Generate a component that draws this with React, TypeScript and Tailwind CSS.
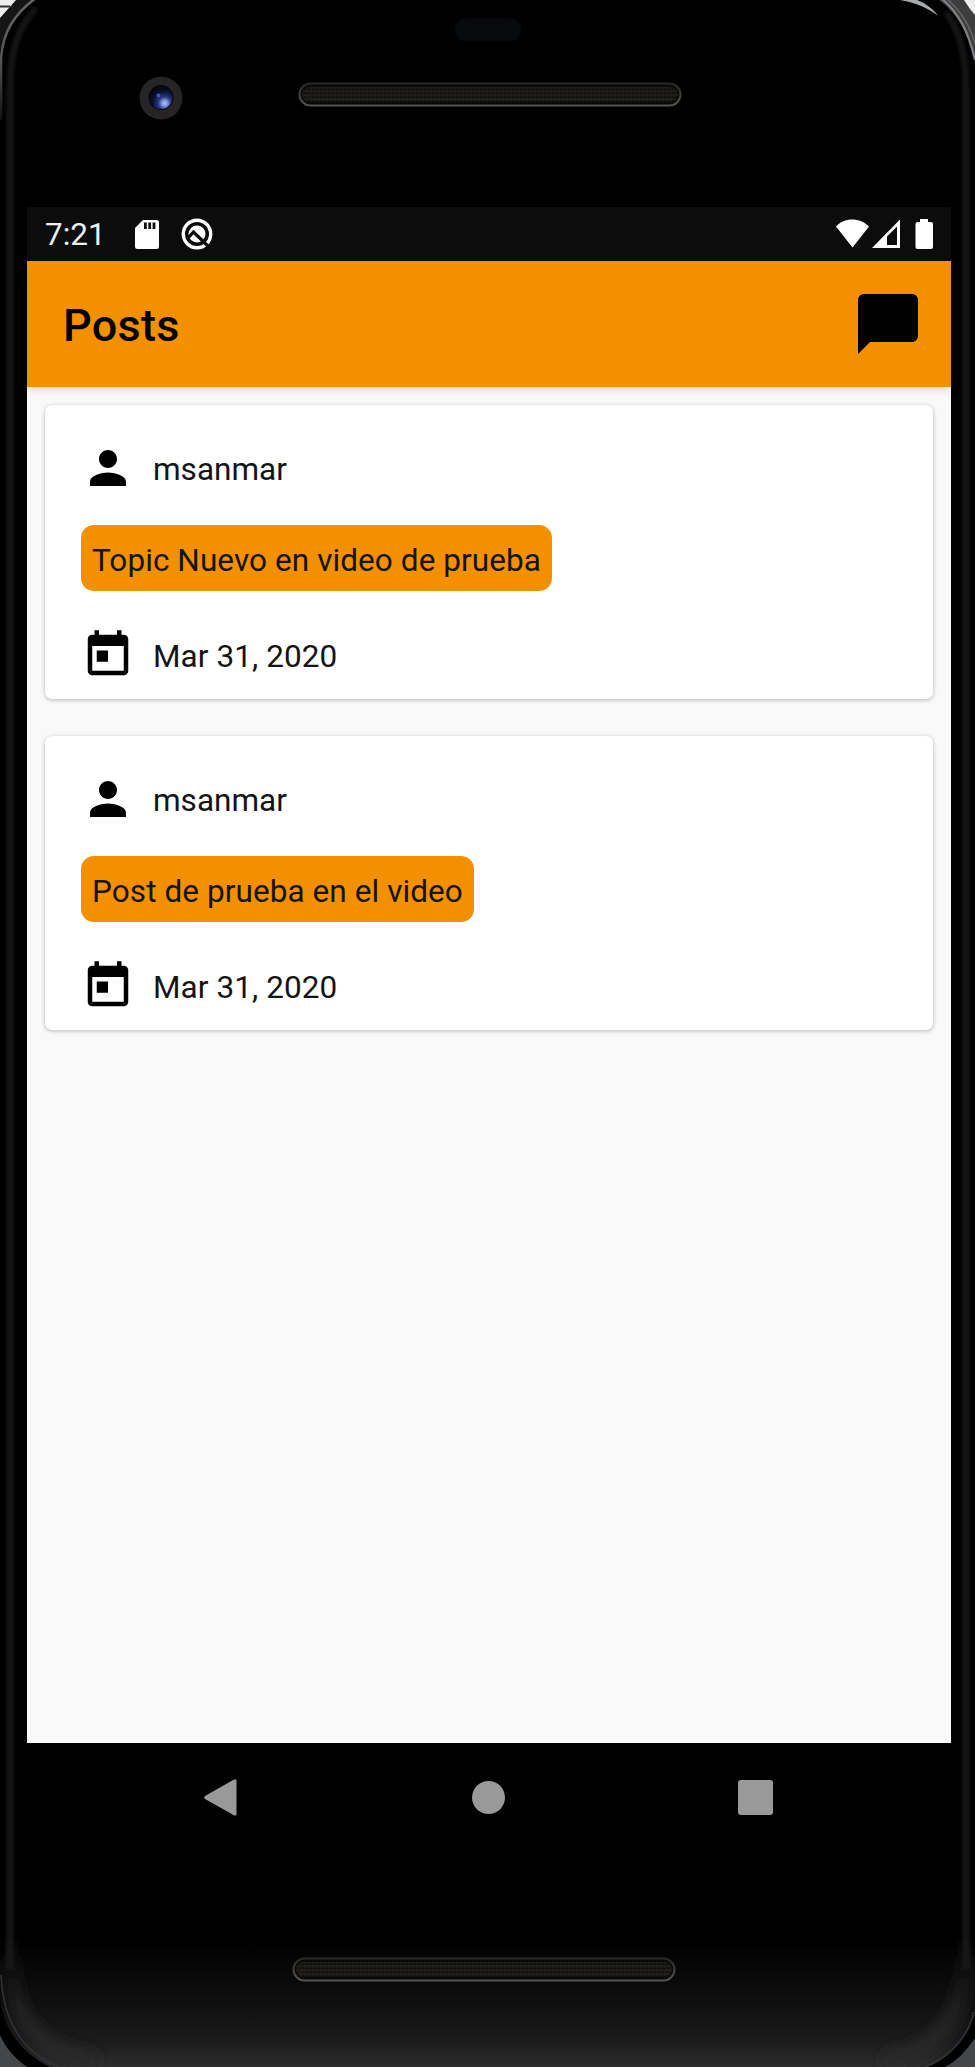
import { MdPerson, MdToday, MdChatBubble } from "react-icons/md";

const posts = [
  { user: "msanmar", topic: "Topic Nuevo en video de prueba", date: "Mar 31, 2020" },
  { user: "msanmar", topic: "Post de prueba en el video", date: "Mar 31, 2020" },
];

function PhoneBody() {
  return (
    <svg className="absolute inset-0" width="975" height="2067" viewBox="0 0 975 2067" fill="none">
      <defs>
        <linearGradient id="chin" x1="0" y1="1940" x2="0" y2="2067" gradientUnits="userSpaceOnUse">
          <stop offset="0" stopColor="#000" />
          <stop offset="0.45" stopColor="#0e0e0e" />
          <stop offset="0.8" stopColor="#1b1b1b" />
          <stop offset="1" stopColor="#2d2d2d" />
        </linearGradient>
        <linearGradient id="rimLeft" x1="0" y1="0" x2="0" y2="120" gradientUnits="userSpaceOnUse">
          <stop offset="0" stopColor="#666" />
          <stop offset="0.5" stopColor="#555" />
          <stop offset="1" stopColor="#111" />
        </linearGradient>
        <linearGradient id="cornerGlow" x1="0" y1="1930" x2="0" y2="2050" gradientUnits="userSpaceOnUse">
          <stop offset="0" stopColor="#2b2b2b" stopOpacity="0" />
          <stop offset="1" stopColor="#2b2b2b" />
        </linearGradient>
        <filter id="soft" x="-10" y="-10" width="995" height="2087" filterUnits="userSpaceOnUse">
          <feGaussianBlur stdDeviation="2" />
        </filter>
        <filter id="wide" x="-20" y="1850" width="1015" height="240" filterUnits="userSpaceOnUse">
          <feGaussianBlur stdDeviation="7" />
        </filter>
      </defs>
      <rect y="1940" width="975" height="127" fill="url(#chin)" />
      <path d="M12 1930V1970C16 2025 45 2054 95 2060M965 1930V1970C958 2025 930 2054 885 2060" stroke="url(#cornerGlow)" strokeWidth="14" filter="url(#wide)" />
      <path d="M36 8C18 28 10 50 10 90V1970" stroke="#1f1f1f" strokeWidth="5" filter="url(#soft)" />
      <path d="M946 12C960 32 966 55 966 90V1970" stroke="#1e1e1e" strokeWidth="5" filter="url(#soft)" />
      <path d="M0 0H34C14 14 3 32 0 52Z" fill="#151515" />
      <path d="M0 0H16L0 18Z" fill="#ededed" />
      <path d="M0 6.500H10" stroke="#333" strokeWidth="2" />
      <path d="M36 -2C14 14 3 32 1 58V120" stroke="url(#rimLeft)" strokeWidth="2.500" />
      <path d="M939 0H975V60C969 34 958 14 939 0Z" fill="#3d3d3d" />
      <path d="M964 0H975V15L970 9Z" fill="#eee" />
      <path d="M941 -2C958 12 968 30 975 60" stroke="#808086" strokeWidth="2.200" />
      <path d="M946 -2C962 12 970 26 976 46" stroke="#666" strokeWidth="1.500" />
      <path d="M900 0H917C927 4 934 10 938 16C930 9 917 3 900 0Z" fill="#a4aaad" />
      <path d="M0 2000C5 2032 22 2053 50 2067H0ZM975 2010C970 2037 950 2058 928 2067H975Z" fill="#000" />
      <path d="M0 2035C6 2048 14 2058 27 2067H0ZM975 2038C966 2051 957 2061 945 2067H975Z" fill="#43474a" />
      <path d="M1 1975C3 2020 22 2052 58 2067M974 2012C968 2037 950 2057 925 2067" stroke="#30343a" strokeWidth="1.500" />
    </svg>
  );
}

function Speaker({ id }: { id: string }) {
  return (
    <svg width="384" height="26" viewBox="0 0 384 26">
      <defs>
        <pattern id={id} width="4" height="4" patternUnits="userSpaceOnUse">
          <rect width="4" height="4" fill="#12110f" />
          <path d="M1 0V3M3 0V2" stroke="#34312b" strokeWidth="0.8" />
        </pattern>
        <linearGradient id={id + "rim"} x1="0" y1="0" x2="0" y2="1">
          <stop offset="0" stopColor="#292929" />
          <stop offset="1" stopColor="#55534f" />
        </linearGradient>
      </defs>
      <rect x="1.5" y="1.5" width="381" height="22" rx="11" fill="#090909" stroke={"url(#" + id + "rim)"} strokeWidth="2" />
      <rect x="4" y="5" width="376" height="15" rx="7.5" fill={"url(#" + id + ")"} />
    </svg>
  );
}

function Camera() {
  return (
    <svg width="44" height="44" viewBox="0 0 44 44">
      <defs>
        <radialGradient id="lens" cx="0.66" cy="0.75" r="0.75">
          <stop offset="0" stopColor="#b6c0f5" />
          <stop offset="0.18" stopColor="#7d8ddd" />
          <stop offset="0.38" stopColor="#25377d" />
          <stop offset="0.7" stopColor="#0a1030" />
          <stop offset="1" stopColor="#07070e" />
        </radialGradient>
      </defs>
      <circle cx="22" cy="22" r="21.5" fill="#262424" />
      <circle cx="22" cy="21.5" r="12.5" fill="#050507" />
      <circle cx="22" cy="21.5" r="11.5" fill="url(#lens)" />
      <circle cx="19.5" cy="19.5" r="2" fill="#4058b8" />
    </svg>
  );
}

function StatusBar() {
  return (
    <div className="flex h-[54px] items-center justify-between bg-[#0c0c0c] pl-[18px] pr-[18px] text-white">
      <div className="flex items-center">
        <span className="w-[90px] pt-[2px] text-[31.5px] leading-[36px] text-[#eee]">7:21</span>
        <svg width="24" height="29" viewBox="0 0 24 29" fill="#fff">
          <path d="M8 0H21.500Q24 0 24 2.500V26.500Q24 29 21.500 29H2.500Q0 29 0 26.500V8Z" />
          <path d="M9 2.500h2.800v6.500H9zM13.300 2.500h2.800v6.500h-2.800zM17.600 2.500h2.800v6.500h-2.800z" fill="#0c0c0c" />
        </svg>
        <svg className="ml-[22px]" width="32" height="32" viewBox="0 0 32 32" fill="none">
          <circle cx="16" cy="16" r="13.700" stroke="#fff" strokeWidth="3.400" />
          <circle cx="16" cy="16" r="8.500" fill="#fff" />
          <path d="M7.500 19.500L12.500 14L28 29" stroke="#0c0c0c" strokeWidth="3.200" />
        </svg>
      </div>
      <svg width="98" height="30" viewBox="0 0 98 30" fill="#fff">
        <path d="M1 7.500C9-2 25-2 34 7.500L17.500 28.500Z" />
        <path fillRule="evenodd" d="M65 .5V29H37ZM62 7.500L52 17.500V26H62Z" />
        <path d="M85 0h8v3H96q2 0 2 2v23q0 2-2 2H82.500q-2 0-2-2V5q0-2 2-2h2.500z" />
      </svg>
    </div>
  );
}

function PostCard({ user, topic, date }: { user: string; topic: string; date: string }) {
  return (
    <article className="flex h-[294px] flex-col items-start rounded-[7px] bg-white pl-9 pt-9 text-[31.5px] leading-[37px] tracking-[0.08px] text-[#141414] shadow-[0_1px_4px_rgba(0,0,0,0.28)]">
      <div className="flex h-[54px] items-center gap-[18px]">
        <MdPerson className="size-[54px] text-black" />
        <span className="pt-[2px] tracking-normal">{user}</span>
      </div>
      <div className="mt-[30px] flex h-[66px] items-center whitespace-nowrap rounded-[13px] bg-[#f39000] px-[11px] pt-[4px]">
        {topic}
      </div>
      <div className="mt-[37px] flex h-[54px] items-center gap-[18px]">
        <MdToday className="size-[54px] text-black" />
        <span className="pt-[2px]">{date}</span>
      </div>
    </article>
  );
}

export default function App() {
  return (
    <div className="relative flex h-[2067px] w-[975px] flex-col overflow-hidden bg-black font-['Roboto',sans-serif]">
      <PhoneBody />
      <header className="relative h-[207px] shrink-0">
        <div className="absolute left-[455px] top-[18px] h-[23px] w-[66px] rounded-[11px] bg-[#07090d]" />
        <div className="absolute left-[139px] top-[76px]"><Camera /></div>
        <div className="absolute left-[298px] top-[82px]"><Speaker id="ear" /></div>
      </header>
      <main className="relative ml-[27px] flex h-[1536px] w-[924px] shrink-0 flex-col bg-[#f9f9f9]">
        <StatusBar />
        <div className="relative flex h-[126px] shrink-0 items-center justify-between bg-[#f39000] pl-9 pr-[27px] text-black shadow-[0_2px_8px_rgba(0,0,0,0.16)]">
          <h1 className="pt-[3px] text-[45px] font-medium leading-[53px] tracking-[0.3px]">Posts</h1>
          <MdChatBubble className="size-[72px]" />
        </div>
        <div className="flex flex-col gap-[37px] p-[18px]">
          {posts.map((post) => <PostCard key={post.topic} {...post} />)}
        </div>
      </main>
      <nav className="relative ml-[27px] flex h-[108px] w-[924px] shrink-0 items-center justify-between pl-[177px] pr-[178px]">
        <svg width="33" height="37" viewBox="0 0 33 37"><path d="M29.500 .8Q32.500-.5 32.500 2V35Q32.500 37.500 29.500 36L1 20Q-.5 18.500 1 17Z" fill="#999" /></svg>
        <div className="ml-[1px] size-[33px] rounded-full bg-[#999]" />
        <div className="size-[35px] rounded-[3px] bg-[#999]" />
      </nav>
      <footer className="relative pl-[292px] pt-[106px]"><Speaker id="bottom" /></footer>
    </div>
  );
}
